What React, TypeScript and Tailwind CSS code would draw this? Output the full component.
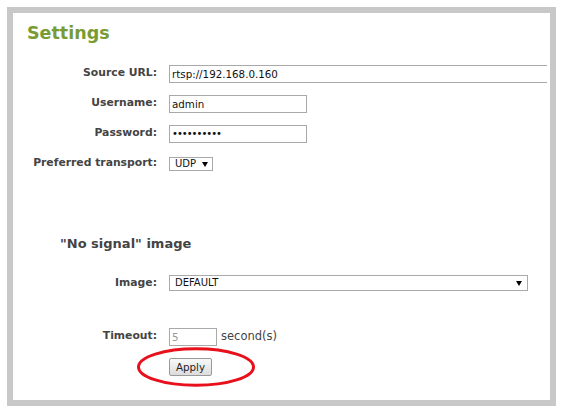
import React from "react";

function Arrow({ className }: { className?: string }) {
  return (
    <svg className={className} width="6" height="5" viewBox="0 0 6 5">
      <polygon points="0,0 6,0 3,5" fill="#000" />
    </svg>
  );
}

function Label({ children }: { children: React.ReactNode }) {
  return (
    <div className="w-[144px] shrink-0 text-right text-[10.8px] leading-[15px] font-bold text-[#444]">
      {children}
    </div>
  );
}

export default function App() {
  return (
    <div className="relative w-[563px] h-[413px] bg-white pt-[7px] pl-[7px] font-['DejaVu_Sans',Verdana,sans-serif]">
      <div className="w-[549px] h-[399px] border-[6px] border-[#c8c8c8] overflow-hidden bg-white">
        <h1 className="mt-[10px] ml-[14px] text-[17.5px] leading-[20px] font-bold text-[#789c33]">Settings</h1>

        <div className="mt-[22px] flex flex-col gap-[12px]">
          <div className="flex h-[18px]">
            <Label>Source URL:</Label>
            <div className="ml-[12px] w-[378px] h-[18px] border border-r-0 border-[#a9a9a9] pl-[2px] text-[10.3px] leading-[16px] text-[#111]">
              rtsp://192.168.0.160
            </div>
          </div>
          <div className="flex h-[18px]">
            <Label>Username:</Label>
            <div className="ml-[12px] w-[138px] h-[18px] border border-[#a9a9a9] pl-[2px] text-[10.3px] leading-[16px] text-[#111]">
              admin
            </div>
          </div>
          <div className="flex h-[18px]">
            <Label>Password:</Label>
            <div className="ml-[12px] w-[138px] h-[18px] border border-[#a9a9a9] pl-[2px] text-[10px] leading-[16px] tracking-[-1px] text-[#111]">
              ••••••••••
            </div>
          </div>
          <div className="flex h-[18px]">
            <Label>Preferred transport:</Label>
            <div className="ml-[12px] mt-[2px] w-[44px] h-[14px] border border-[#a9a9a9] pl-[5px] flex items-center text-[10px] leading-[12px] text-[#111]">
              <span>UDP</span>
              <Arrow className="ml-[6px]" />
            </div>
          </div>
        </div>

        <h2 className="mt-[63px] ml-[47px] text-[13px] leading-[16px] font-bold text-[#444]">"No signal" image</h2>

        <div className="mt-[23px] flex h-[16px]">
          <Label>Image:</Label>
          <div className="ml-[12px] w-[359px] h-[16px] border border-[#a9a9a9] pl-[5px] pr-[5px] flex items-center justify-between text-[10px] leading-[14px] text-[#111]">
            <span>DEFAULT</span>
            <Arrow />
          </div>
        </div>

        <div className="mt-[37px] flex h-[18px]">
          <Label>Timeout:</Label>
          <div className="ml-[12px] w-[48px] h-[18px] border border-[#a9a9a9] pl-[2px] text-[10.3px] leading-[16px] text-[#999]">
            5
          </div>
          <span className="ml-[4px] text-[11.5px] leading-[17px] text-[#444]">second(s)</span>
        </div>

        <div className="mt-[12px] ml-[156px]">
          <div className="w-[43px] h-[18px] rounded-[2px] border border-[#9a9a9a] bg-gradient-to-b from-[#f8f8f8] to-[#dcdcdc] flex items-center justify-center text-[10.3px] leading-[14px] text-[#222]">
            Apply
          </div>
        </div>
      </div>

      <svg className="absolute left-[136px] top-[347px]" width="120" height="40" viewBox="0 0 120 40">
        <ellipse cx="60" cy="20" rx="57.5" ry="18.3" fill="none" stroke="#e8101a" strokeWidth="3" />
      </svg>
    </div>
  );
}
